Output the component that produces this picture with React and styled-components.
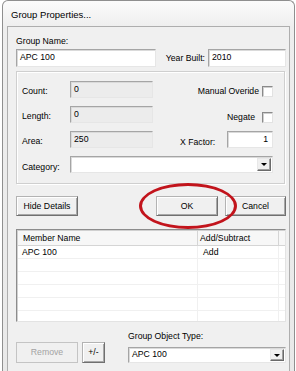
import React from 'react';
import styled, { createGlobalStyle } from 'styled-components';

const Global = createGlobalStyle`
  html, body { margin: 0; padding: 0; background: #ffffff; }
  body {
    width: 296px; height: 371px; overflow: hidden;
    font-family: "Liberation Sans", Arial, sans-serif;
    font-size: 8.7px; color: #000;
  }
  * { box-sizing: border-box; }
`;

const Window = styled.div`
  margin-left: 2px;
  width: 293px;
  height: 380px;
  border: 1px solid #8f8f8f;
  border-bottom: none;
  border-radius: 6px 6px 0 0;
  background: linear-gradient(#fbfbfb, #eeeeee 26px, #e9e9e9);
  padding: 0 4px;
  display: flex;
  flex-direction: column;
`;

const TitleBar = styled.div`
  height: 25px;
  display: flex;
  align-items: center;
  padding: 2px 0 0 4px;
  font-size: 9.5px;
  color: #000;
`;

const Client = styled.div`
  flex: 1;
  border: 1px solid #aeaeae;
  border-bottom: none;
  background: #f0f0f0;
  padding: 9px 3px 0 8px;
  display: flex;
  flex-direction: column;
`;

const Label = styled.div`
  line-height: 11px;
  height: 11px;
  white-space: nowrap;
  color: ${p => (p.$disabled ? '#a3a3a3' : '#000')};
`;

const Row = styled.div`
  display: flex;
  align-items: ${p => p.$align || 'center'};
  margin-top: ${p => p.$mt || 0}px;
`;

const Field = styled.div`
  width: ${p => p.$w}px;
  height: ${p => p.$h || 17}px;
  background: ${p => (p.$readonly ? '#ececec' : '#ffffff')};
  border: 1px solid;
  border-color: #a5a5a5 #e6e6e6 #e6e6e6 #a5a5a5;
  box-shadow: inset 1px 1px 0 #dadada;
  display: flex;
  align-items: ${p => (p.$top ? 'flex-start' : 'center')};
  justify-content: ${p => (p.$right ? 'flex-end' : 'flex-start')};
  padding: ${p => (p.$top ? '2px 4px 0 3px' : '0 4px 1px 3px')};
  line-height: 11px;
  margin-left: ${p => p.$ml || 0}px;
  flex: none;
`;

const GroupBox = styled.div`
  margin-top: 4px;
  width: 269px;
  height: 113px;
  border: 1px solid #cfcfcf;
  box-shadow: inset 1px 1px 0 #ffffff, 1px 1px 0 #ffffff;
  padding: 9px 11px 0 5px;
  display: flex;
  flex-direction: column;
  gap: 8px;
`;

const BoxRow = styled.div`
  display: flex;
  align-items: center;
  height: 17px;
`;

const RowLabel = styled.div`
  width: ${p => p.$w || 48}px;
  padding-top: ${p => p.$pt ?? 4}px;
  line-height: 11px;
  white-space: nowrap;
  flex: none;
`;

const RightGroup = styled.div`
  margin-left: auto;
  display: flex;
  align-items: center;
  padding-top: ${p => p.$pt || 0}px;
`;

const Check = styled.span`
  display: inline-block;
  width: 11px;
  height: 11px;
  background: #fff;
  border: 1px solid;
  border-color: #8a8a8a #e2e2e2 #e2e2e2 #8a8a8a;
  box-shadow: inset 1px 1px 0 #cfcfcf;
  margin-left: ${p => p.$ml || 3}px;
`;

const ComboBox = styled.div`
  width: ${p => p.$w}px;
  height: ${p => p.$h || 17}px;
  margin-left: ${p => p.$ml || 0}px;
  background: #fff;
  border: 1px solid;
  border-color: #a5a5a5 #e6e6e6 #e6e6e6 #a5a5a5;
  box-shadow: inset 1px 1px 0 #dadada;
  display: flex;
  align-items: stretch;
  flex: none;
`;

const ComboText = styled.div`
  flex: 1;
  display: flex;
  align-items: center;
  padding: 0 0 1px 3px;
  line-height: 11px;
`;

const DropButton = styled.div`
  width: 14px;
  margin: 1px 1px 1px 0;
  background: #f0f0f0;
  border: 1px solid;
  border-color: #e8e8e8 #6a6a6a #6a6a6a #e8e8e8;
  box-shadow: inset -1px -1px 0 #a0a0a0;
  display: flex;
  align-items: center;
  justify-content: center;
`;

const Arrow = styled.span`
  width: 0;
  height: 0;
  border-left: 3px solid transparent;
  border-right: 3px solid transparent;
  border-top: 3px solid #000;
`;

const Button = styled.button`
  width: ${p => p.$w}px;
  height: ${p => p.$h || 20}px;
  margin-left: ${p => p.$ml || 0}px;
  font-family: inherit;
  font-size: 8.7px;
  color: ${p => (p.disabled ? '#a3a3a3' : '#000')};
  background: #f0f0f0;
  border: 1px solid;
  border-color: ${p => (p.disabled ? '#c4c4c4' : '#b3b3b3 #707070 #707070 #b3b3b3')};
  box-shadow: ${p => (p.disabled ? 'none' : 'inset 1px 1px 0 #ffffff, inset -1px -1px 0 #a8a8a8')};
  padding: 0 0 1px;
  flex: none;
  cursor: default;
`;

const OkWrap = styled.div`
  position: relative;
  margin-left: auto;
  display: flex;
`;

const Highlight = styled.div`
  position: absolute;
  left: -17px;
  top: -13px;
  width: 98px;
  height: 46px;
  border: 3px solid #c2141c;
  border-radius: 50%;
  pointer-events: none;
`;

const List = styled.div`
  margin-top: 13px;
  width: 270px;
  height: 93px;
  background: #fff;
  border: 1px solid;
  border-color: #8c8c8c #e3e3e3 #e3e3e3 #8c8c8c;
  box-shadow: inset 1px 1px 0 #d0d0d0;
  padding: 1px 0 0 1px;
  overflow: hidden;
`;

const ListRow = styled.div`
  display: flex;
  height: ${p => (p.$header ? 15 : 13)}px;
  background: ${p => (p.$header ? '#f7f7f7' : '#fff')};
  border-bottom: 1px solid ${p => (p.$header ? '#d5d5d5' : '#f0f0f0')};
`;

const Cell = styled.div`
  width: ${p => p.$w}px;
  flex: ${p => (p.$w ? 'none' : 1)};
  display: flex;
  align-items: center;
  padding-left: ${p => p.$pl ?? 5}px;
  border-right: ${p => (p.$last ? 'none' : '1px solid ' + (p.$header ? '#d5d5d5' : '#f0f0f0'))};
  line-height: 11px;
  white-space: nowrap;
  overflow: hidden;
`;

const ObjectType = styled.div`
  margin-left: auto;
  width: 158px;
  display: flex;
  flex-direction: column;
  gap: 5px;
`;

const members = [
  { name: 'APC 100', op: 'Add' },
  { name: '', op: '' },
  { name: '', op: '' },
  { name: '', op: '' },
  { name: '', op: '' },
  { name: '', op: '' },
];

export default function App() {
  return (
    <>
      <Global />
      <Window>
        <TitleBar>Group Properties...</TitleBar>
        <Client>
          <Label>Group Name:</Label>
          <Row $mt={2}>
            <Field $w={140} $h={18}>APC 100</Field>
            <Label style={{ marginLeft: 'auto' }}>Year Built:</Label>
            <Field $w={78} $h={18} $ml={3}>2010</Field>
          </Row>

          <GroupBox>
            <BoxRow>
              <RowLabel>Count:</RowLabel>
              <Field $w={83} $readonly $top>0</Field>
              <RightGroup $pt={3}>
                <span>Manual Overide</span>
                <Check />
              </RightGroup>
            </BoxRow>
            <BoxRow>
              <RowLabel>Length:</RowLabel>
              <Field $w={83} $readonly $top>0</Field>
              <RightGroup $pt={5}>
                <span>Negate</span>
                <Check $ml={7} />
              </RightGroup>
            </BoxRow>
            <BoxRow>
              <RowLabel $pt={3}>Area:</RowLabel>
              <Field $w={83} $readonly $top>250</Field>
              <RightGroup>
                <RowLabel $w={47} $pt={6}>X Factor:</RowLabel>
                <Field $w={46} $right $top>1</Field>
              </RightGroup>
            </BoxRow>
            <BoxRow>
              <RowLabel $pt={5}>Category:</RowLabel>
              <ComboBox $w={203}>
                <ComboText />
                <DropButton><Arrow /></DropButton>
              </ComboBox>
            </BoxRow>
          </GroupBox>

          <Row $mt={12}>
            <Button $w={62}>Hide Details</Button>
            <OkWrap>
              <Button $w={62}>OK</Button>
              <Highlight />
            </OkWrap>
            <Button $w={61} $ml={7}>Cancel</Button>
          </Row>

          <List>
            <ListRow $header>
              <Cell $w={180} $header>Member Name</Cell>
              <Cell $w={81} $header $pl={2}>Add/Subtract</Cell>
              <Cell $header $last />
            </ListRow>
            {members.map((m, i) => (
              <ListRow key={i}>
                <Cell $w={180} $pl={4}>{m.name}</Cell>
                <Cell $w={81}>{m.op}</Cell>
                <Cell $last />
              </ListRow>
            ))}
          </List>

          <Row $mt={9} $align="flex-end">
            <Button $w={62} $h={21} disabled>Remove</Button>
            <Button $w={23} $h={21} $ml={4}>+/-</Button>
            <ObjectType>
              <Label>Group Object Type:</Label>
              <ComboBox $w={158} $h={16}>
                <ComboText>APC 100</ComboText>
                <DropButton><Arrow /></DropButton>
              </ComboBox>
            </ObjectType>
          </Row>
        </Client>
      </Window>
    </>
  );
}
